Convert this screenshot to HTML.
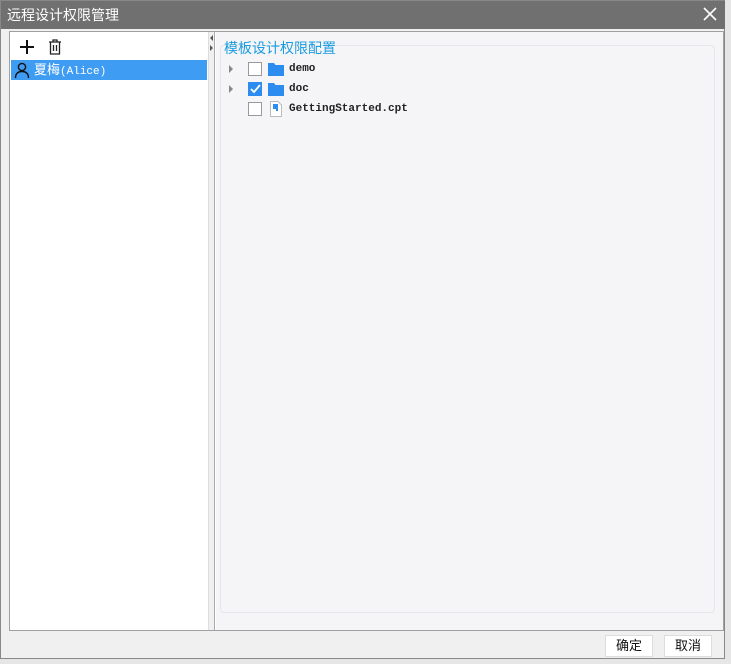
<!DOCTYPE html>
<html><head><meta charset="utf-8"><style>
*{margin:0;padding:0;box-sizing:border-box}
body{width:731px;height:664px;background:#e6e6e6;position:relative;overflow:hidden;font-family:"Liberation Sans","Noto Sans CJK SC",sans-serif}
.dlg{position:absolute;left:0;top:0;width:725px;height:659px;background:#f0f0f0;border:1px solid #888}
.title{position:absolute;left:0;top:0;width:724px;height:28px;background:#707070;color:#fff;font-size:14px;line-height:28px;padding-left:6px}
.x{position:absolute;right:8px;top:6px}
.box{position:absolute;left:8px;top:30px;width:715px;height:600px;border:1px solid #a0a0a0;background:#fff}
.left{position:absolute;left:1px;top:1px;width:197px;height:596px;background:#fff}
.split{position:absolute;left:198px;top:0;width:7px;height:598px;background:#f0f0f0;border-left:1px solid #ddd;border-right:1px solid #aaa}
.right{position:absolute;left:206px;top:0;width:507px;height:598px;background:#f5f5f7}
.inner{position:absolute;left:4px;top:13px;width:495px;height:568px;border:1px solid #e6e6ea;border-radius:4px}
.sel{position:absolute;left:1px;top:28px;width:196px;height:20px;background:#3f9cf3;color:#fff;font-size:13px;line-height:20px;padding-left:23px}
.mono{font-family:"Liberation Mono","Noto Sans CJK SC",monospace;font-size:11px}
.hdr{position:absolute;left:8px;top:6px;color:#1a9ce0;font-size:14px}
.row{position:absolute;left:0;height:20px;font-family:"Liberation Mono",monospace;font-size:11px;font-weight:bold;color:#222;line-height:20px}
.cb{position:absolute;left:20px;top:3px;width:14px;height:14px;border:1px solid #999;background:#fff}
.btn{position:absolute;top:634px;width:48px;height:22px;background:#fff;border:1px solid #ddd;font-size:13px;line-height:20px;text-align:center;color:#111}
</style></head><body>
<div class="dlg">
<div class="title">远程设计权限管理
<svg class="x" width="14" height="14"><path d="M1 1L13 13M13 1L1 13" stroke="#fff" stroke-width="1.6"/></svg></div>
<div class="box">
<div class="left">
<svg style="position:absolute;left:9px;top:7px" width="14" height="14"><path d="M7 0V14M0 7H14" stroke="#111" stroke-width="2"/></svg>
<svg style="position:absolute;left:37px;top:6px" width="14" height="16"><path d="M1 3H13M5 3V1H9V3M2.5 3V15H11.5V3M5.5 6V12M8.5 6V12" stroke="#222" stroke-width="1.3" fill="none"/></svg>
</div>
<div class="sel"><svg style="position:absolute;left:3px;top:2px" width="16" height="16"><circle cx="8" cy="5" r="3.6" stroke="#111" stroke-width="1.4" fill="none"/><path d="M1.5 16C1.5 11 4.5 9.5 8 9.5S14.5 11 14.5 16" stroke="#111" stroke-width="1.4" fill="none"/></svg>夏梅<span class="mono">(Alice)</span></div>
<div class="split"><svg style="position:absolute;left:0;top:3px" width="6" height="22"><path d="M4 0L1 3L4 6Z M1 10L4 13L1 16Z" fill="#555"/></svg></div>
<div class="right">
<div class="inner"></div>
<div class="hdr">模板设计权限配置</div>
<div class="row" style="top:27px;left:12px;width:300px"><svg style="position:absolute;left:0;top:6px" width="6" height="8"><path d="M1 0L5 4L1 8Z" fill="#888"/></svg><div class="cb"></div><svg style="position:absolute;left:40px;top:3px" width="16" height="14"><path d="M0 1H6L7.5 3H16V14H0Z" fill="#2d8cf0"/></svg><span style="position:absolute;left:61px">demo</span></div>
<div class="row" style="top:47px;left:12px;width:300px"><svg style="position:absolute;left:0;top:6px" width="6" height="8"><path d="M1 0L5 4L1 8Z" fill="#888"/></svg><div class="cb" style="background:#2d8cf0;border-color:#2d8cf0"><svg width="12" height="12" style="position:absolute;left:0;top:0"><path d="M2 6L5 9L11 2" stroke="#fff" stroke-width="1.8" fill="none"/></svg></div><svg style="position:absolute;left:40px;top:3px" width="16" height="14"><path d="M0 1H6L7.5 3H16V14H0Z" fill="#2d8cf0"/></svg><span style="position:absolute;left:61px">doc</span></div>
<div class="row" style="top:67px;left:12px;width:300px"><div class="cb"></div><svg style="position:absolute;left:42px;top:2px" width="12" height="16"><path d="M0.5 0.5H8L11.5 4V15.5H0.5Z" fill="#fff" stroke="#bbb"/><path d="M3 3H8V10H6V8H3Z" fill="#2d8cf0"/></svg><span style="position:absolute;left:61px">GettingStarted.cpt</span></div>
</div>
</div>
<div class="btn" style="left:604px">确定</div>
<div class="btn" style="left:663px">取消</div>
</div>
</body></html>
